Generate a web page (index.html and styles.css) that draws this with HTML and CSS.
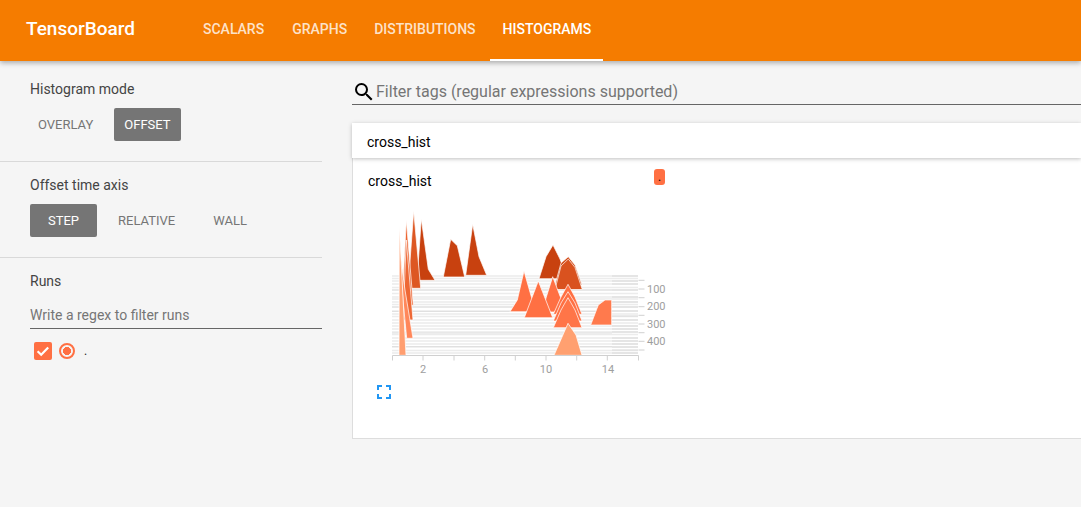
FILE: index.html
```html
<!DOCTYPE html>
<html lang="en">
<head>
    <meta charset="UTF-8">
    <title>TensorBoard</title>
    <link rel="stylesheet" href="styles.css">
</head>
<body>
    <header class="toolbar">
        <div class="brand">TensorBoard</div>
        <nav class="tabs">
            <a class="tab">SCALARS</a>
            <a class="tab">GRAPHS</a>
            <a class="tab">DISTRIBUTIONS</a>
            <a class="tab active">HISTOGRAMS</a>
        </nav>
    </header>

    <div class="content">
        <aside class="sidebar">
            <section class="panel panel-mode">
                <div class="panel-title">Histogram mode</div>
                <div class="btn-row">
                    <span class="btn">OVERLAY</span>
                    <span class="btn selected">OFFSET</span>
                </div>
            </section>
            <section class="panel panel-axis">
                <div class="panel-title">Offset time axis</div>
                <div class="btn-row">
                    <span class="btn selected">STEP</span>
                    <span class="btn">RELATIVE</span>
                    <span class="btn">WALL</span>
                </div>
            </section>
            <section class="panel panel-runs">
                <div class="panel-title">Runs</div>
                <div class="regex">Write a regex to filter runs</div>
                <div class="run">
                    <span class="check">
                        <svg width="18" height="18" viewBox="0 0 18 18"><path d="M3.6 9.2l3.6 3.5 7-7.2" fill="none" stroke="#fff" stroke-width="2.2"/></svg>
                    </span>
                    <span class="radio"></span>
                    <span class="run-name">.</span>
                </div>
            </section>
        </aside>

        <main class="main">
            <div class="filter">
                <svg class="search" width="24" height="24" viewBox="0 0 24 24"><path d="M15.5 14h-.79l-.28-.27A6.47 6.47 0 0 0 16 9.5 6.5 6.5 0 1 0 9.5 16c1.61 0 3.09-.59 4.23-1.57l.27.28v.79l5 4.99L20.49 19l-4.99-5zm-6 0C7.01 14 5 11.99 5 9.5S7.01 5 9.5 5 14 7.01 14 9.5 11.99 14 9.5 14z"/></svg>
                <span class="filter-text">Filter tags (regular expressions supported)</span>
            </div>

            <div class="category">cross_hist</div>
            <div class="card">
                <div class="card-head">
                    <span class="card-title">cross_hist</span>
                    <span class="tag">.</span>
                </div>
                <svg class="chart" width="300" height="175" viewBox="385 205 300 175">
                    <g class="grid">
                        <path d="M392 276H638M392 278.500H638M392 281H638M392 284H638M392 287.500H638M392 290H638M392 293.500H638M392 297H638M392 299H638M392 302H638M392 304.500H638M392 307H638M392 311H638M392 314H638M392 316.500H638M392 320H638M392 323H638M392 326H638M392 329H638M392 332H638M392 334.500H638M392 338H638M392 341H638M392 344H638M392 347H638M392 350.500H638M392 353H638"/>
                    </g>
                    <g class="grid grid-dark">
                        <path d="M612 276H638M612 281H638M612 284H638M612 290H638M612 297H638M612 302H638M612 307H638M612 311H638M612 316H638M612 320H638M612 326H638M612 329H638M612 332H638M612 338H638M612 341H638M612 344H638M612 347H638M612 350H638M612 353H638"/>
                    </g>
                    <g class="grid grid-mid">
                        <path d="M392 290H612M392 307H612M392 311.500H612M392 333H612M392 346.500H612"/>
                    </g>

                    <g class="hist">
                        <polygon fill="#c8410f" points="417,280.300 421.300,219 428.300,269.300 435,280.300"/>
                        <polygon fill="#c8410f" points="443.300,277 450.700,239.300 457.300,245.700 464.700,277"/>
                        <polygon fill="#c8410f" points="465.700,275.300 472.700,224.300 479,256.700 486.700,275.300"/>
                        <polygon fill="#c8410f" points="539,278.700 546,256.700 553,245 560,259 567,278.700"/>
                        <polygon fill="#d24a17" points="555,285 561,263 568.300,256.700 575,265 582,285"/>
                        <polygon fill="#d9521f" points="555,289.500 561,266 568.300,259 575,267.500 582.300,289.500"/>
                        <polygon fill="#dd5722" points="408,288.300 413.700,211 420.700,288.300"/>
                        <polygon fill="#ec6430" points="402,305.300 406.300,220 413.300,305.300"/>
                        <polygon fill="#ee6835" points="403,320 406.300,240 413,320"/>
                        <polygon fill="#ff7043" points="510,311.700 517.300,300 524,271 531.300,296.700 538.300,311.700"/>
                        <polygon fill="#ff7043" points="543,312 546,298 552.700,276.700 560,296 568,312"/>
                        <polygon fill="#ff7043" points="524.300,317.700 538.300,281 552.700,317.700"/>
                        <polygon fill="#ff7043" points="553.300,314.300 561,297 568,284.300 575,297 582,314.300"/>
                        <polygon fill="#ff7043" points="553.300,321 561,303 568,291.700 575,303 582,321"/>
                        <polygon fill="#ff7548" points="553.300,327.700 561,310 568,297.700 575,310 582,327.700"/>
                        <polygon fill="#ff7a4d" points="590.700,325 598.300,305 605,300 611.700,300 611.700,325"/>
                        <polygon fill="#ff875a" points="406.700,338.300 403,300 399.500,250 405,290 413,338.300"/>
                        <polygon fill="#ff9e70" points="399,355.300 399.300,226 406,355.300"/>
                        <polygon fill="#ffa070" points="554,355.300 568,323.300 576,335 582,355.300"/>
                    </g>

                    <g class="axis">
                        <path d="M392.500 355.500H638.500M392.500 355.500v5M423 355.500v5M454 355.500v5M484.700 355.500v5M515.300 355.500v5M546 355.500v5M576.700 355.500v5M607.300 355.500v5M638.500 355.500v5"/>
                        <path d="M638.500 280.300h6M638.500 289h6M638.500 297.700h6M638.500 306.700h6M638.500 315.300h6M638.500 324h6M638.500 332.700h6M638.500 341.300h6M638.500 350h6"/>
                    </g>
                    <g class="labels">
                        <text x="423" y="373" text-anchor="middle">2</text>
                        <text x="485" y="373" text-anchor="middle">6</text>
                        <text x="546" y="373" text-anchor="middle">10</text>
                        <text x="608" y="373" text-anchor="middle">14</text>
                        <text x="647" y="293">100</text>
                        <text x="647" y="310">200</text>
                        <text x="647" y="328">300</text>
                        <text x="647" y="345">400</text>
                    </g>
                </svg>
                <svg class="expand" width="14" height="14" viewBox="0 0 14 14"><path d="M1 5V1h4M9 1h4v4M13 9v4H9M5 13H1V9" fill="none" stroke="#2196f3" stroke-width="2"/></svg>
            </div>
        </main>
    </div>
</body>
</html>
```

FILE: styles.css
```css
* {
    box-sizing: border-box;
}
html, body {
    height: 100%;
}
body {
    margin: 0;
    overflow: hidden;
    background: #f5f5f5;
    font-family: Roboto, "Liberation Sans", sans-serif;
    color: #333;
}

/* top bar */
.toolbar {
    display: flex;
    height: 61px;
    padding-left: 26px;
    background: #f57c00;
    color: #fff;
    box-shadow: 0 2px 5px rgba(0, 0, 0, 0.3);
    position: relative;
}
.brand {
    width: 164px;
    font-size: 19px;
    font-weight: 500;
    line-height: 58px;
}
.tabs {
    display: flex;
    gap: 2px;
    height: 61px;
}
.tab {
    padding: 0 12px 0 13px;
    font-size: 14px;
    font-weight: 500;
    line-height: 58px;
    color: rgba(255, 255, 255, 0.8);
}
.tab:first-child {
    margin-right: 1px;
}
.tab.active {
    color: #fff;
    border-bottom: 2px solid #fff;
}

.content {
    display: flex;
}

/* left column */
.sidebar {
    width: 322px;
    flex: none;
}
.panel {
    padding-left: 30px;
    border-bottom: 1px solid #d9d9d9;
}
.panel-mode {
    height: 101px;
    padding-top: 20px;
}
.panel-axis {
    height: 96px;
    padding-top: 15px;
}
.panel-runs {
    padding-top: 15px;
    border-bottom: none;
}
.panel-title {
    font-size: 14px;
    line-height: 17px;
    color: #444;
}
.btn-row {
    display: flex;
    margin-top: 10px;
}
.btn {
    height: 33px;
    padding: 0 19px;
    border-radius: 2px;
    font-size: 13px;
    line-height: 34px;
    color: #757575;
}
.panel-mode .btn {
    padding: 0 10px;
}
.panel-mode .btn:first-child {
    margin-left: -2px;
    margin-right: 11px;
}
.btn.selected {
    background: #757575;
    color: #fff;
}
.panel-axis .btn.selected {
    margin-right: 2px;
    padding: 0 18px;
}
.regex {
    height: 31px;
    margin-top: 8px;
    border-bottom: 1px solid #666;
    font-size: 14px;
    line-height: 34px;
    color: #757575;
}
.run {
    display: flex;
    align-items: center;
    margin: 13px 0 0 4px;
}
.check {
    width: 18px;
    height: 18px;
    border-radius: 2px;
    background: #ff7043;
}
.check svg {
    display: block;
}
.radio {
    width: 16px;
    height: 16px;
    margin-left: 7px;
    border: 2px solid #ff7043;
    border-radius: 50%;
    background: radial-gradient(circle, #ff7043 3.800px, transparent 4.300px);
}
.run-name {
    margin-left: 9px;
    font-size: 12px;
    color: #222;
}

/* right column */
.main {
    flex: 1;
    min-width: 0;
    margin-left: 30px;
    padding-top: 18px;
}
.filter {
    display: flex;
    align-items: center;
    height: 26px;
    border-bottom: 1px solid #666;
}
.search {
    flex: none;
    margin-top: 1px;
    color: #000;
}
.filter-text {
    font-size: 16px;
    color: #757575;
    white-space: nowrap;
}
.category {
    height: 35px;
    margin-top: 18px;
    padding-left: 15px;
    background: #fff;
    box-shadow: 0 1px 4px rgba(0, 0, 0, 0.25);
    font-size: 14px;
    line-height: 39px;
    color: #000;
    position: relative;
}
.card {
    height: 281px;
    padding: 0 0 0 15px;
    background: #fff;
    border-left: 1px solid #ddd;
    border-bottom: 1px solid #ddd;
}
.card-head {
    display: flex;
    align-items: flex-start;
    height: 47px;
}
.card-title {
    width: 286px;
    padding-top: 15px;
    font-size: 14px;
    color: #000;
}
.tag {
    width: 11px;
    height: 16px;
    margin-top: 11px;
    border-radius: 3px;
    background: #ff7043;
    font-size: 12px;
    line-height: 16px;
    text-align: center;
    color: #000;
}
.chart {
    display: block;
    margin-left: 17px;
}
.grid path {
    fill: none;
    stroke: #ececec;
    stroke-width: 1.500;
}
.grid-dark path {
    stroke: #dadada;
    stroke-width: 1;
}
.grid-mid path {
    stroke: #e0e0e0;
    stroke-width: 1;
}
.hist polygon {
    stroke: #fff;
    stroke-opacity: 0.7;
    stroke-width: 1;
}
.axis path {
    fill: none;
    stroke: #d0d0d0;
    stroke-width: 1;
}
.labels text {
    font-family: Roboto, sans-serif;
    font-size: 11px;
    fill: #9e9e9e;
}
.expand {
    display: block;
    margin: 5px 0 0 9px;
}
```
